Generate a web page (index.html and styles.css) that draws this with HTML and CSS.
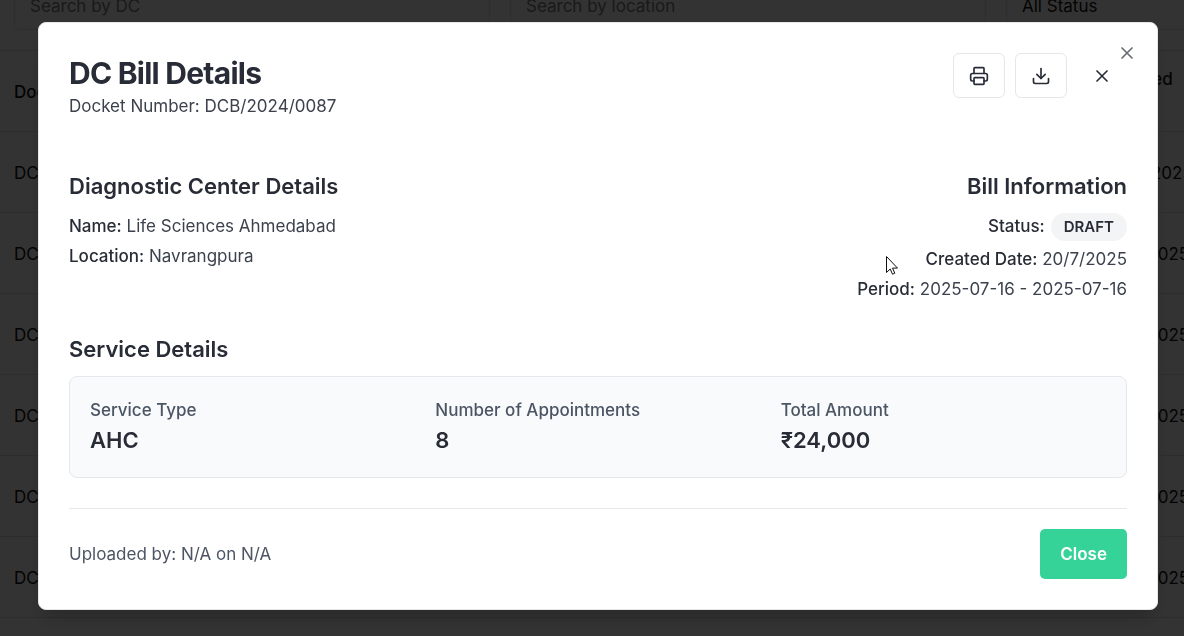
FILE: index.html
```html
<!DOCTYPE html>
<html lang="en">
<head>
<meta charset="utf-8">
<meta name="viewport" content="width=device-width, initial-scale=1">
<title>DC Bill Details</title>
<link rel="stylesheet" href="styles.css">
</head>
<body>
<main class="page" inert>
  <form class="filters">
    <input class="field" type="text" placeholder="Search by DC" aria-label="Search by DC">
    <input class="field" type="text" placeholder="Search by location" aria-label="Search by location">
    <select class="field field-select" aria-label="Status"><option>All Status</option></select>
  </form>
  <table class="bills">
    <thead><tr><th class="col-docket">Docket</th><th>Created<br>Date</th></tr></thead>
    <tbody>
      <tr><td>DCB</td><td>20/7/2025</td></tr>
      <tr><td>DCB</td><td>19/7/2025</td></tr>
      <tr><td>DCB</td><td>19/7/2025</td></tr>
      <tr><td>DCB</td><td>19/7/2025</td></tr>
      <tr><td>DCB</td><td>19/7/2025</td></tr>
      <tr><td>DCB</td><td>19/7/2025</td></tr>
    </tbody>
  </table>
</main>

<div class="overlay">
  <section class="modal" role="dialog" aria-modal="true" aria-labelledby="modal-title">
    <button class="dismiss" type="button" aria-label="Dismiss">
      <svg class="icon" viewBox="0 0 24 24"><path d="M18 6 6 18M6 6l12 12"/></svg>
    </button>

    <header class="modal-header">
      <div>
        <h1 class="title" id="modal-title">DC Bill Details</h1>
        <p class="text">Docket Number: DCB/2024/0087</p>
      </div>
      <div class="actions">
        <button class="icon-button" type="button" aria-label="Print">
          <svg class="icon" viewBox="0 0 24 24"><path d="M6 18H4a2 2 0 0 1-2-2v-5a2 2 0 0 1 2-2h16a2 2 0 0 1 2 2v5a2 2 0 0 1-2 2h-2"/><path d="M6 9V3a1 1 0 0 1 1-1h10a1 1 0 0 1 1 1v6"/><rect x="6" y="14" width="12" height="8" rx="1"/></svg>
        </button>
        <button class="icon-button" type="button" aria-label="Download">
          <svg class="icon" viewBox="0 0 24 24"><path d="M21 15v4a2 2 0 0 1-2 2H5a2 2 0 0 1-2-2v-4"/><path d="m7 10 5 5 5-5"/><path d="M12 15V3"/></svg>
        </button>
        <button class="icon-button ghost" type="button" aria-label="Close">
          <svg class="icon" viewBox="0 0 24 24"><path d="M18 6 6 18M6 6l12 12"/></svg>
        </button>
      </div>
    </header>

    <div class="info">
      <section>
        <h2 class="heading">Diagnostic Center Details</h2>
        <div class="lines">
          <p class="text"><span class="label">Name:</span> Life Sciences Ahmedabad</p>
          <p class="text"><span class="label">Location:</span> Navrangpura</p>
        </div>
      </section>
      <section class="align-end">
        <h2 class="heading">Bill Information</h2>
        <div class="lines">
          <p class="text status"><span class="label">Status:</span> <span class="badge">DRAFT</span></p>
          <p class="text"><span class="label">Created Date:</span> 20/7/2025</p>
          <p class="text"><span class="label">Period:</span> 2025-07-16 - 2025-07-16</p>
        </div>
      </section>
    </div>

    <section class="service">
      <h2 class="heading">Service Details</h2>
      <dl class="summary">
        <div><dt>Service Type</dt><dd>AHC</dd></div>
        <div><dt>Number of Appointments</dt><dd>8</dd></div>
        <div><dt>Total Amount</dt><dd>₹24,000</dd></div>
      </dl>
    </section>

    <footer class="modal-footer">
      <p class="text muted">Uploaded by: N/A on N/A</p>
      <button class="primary" type="button">Close</button>
    </footer>
  </section>
</div>

<svg class="pointer" viewBox="0 0 12 19" aria-hidden="true"><path d="M.5.5v16l3.700-3.500 2.300 5.200 2.300-1-2.300-5.100h5z"/></svg>
</body>
</html>
```
FILE: styles.css
```css
* {
  box-sizing: border-box;
}

body,
h1,
h2,
p,
dl,
dd {
  margin: 0;
}

body {
  height: 100vh;
  overflow: hidden;
  background: #fff;
  color: #272c36;
  font-family: Inter, "Liberation Sans", sans-serif;
  font-size: 17px;
  line-height: 26px;
}

button,
input,
select {
  font: inherit;
  color: inherit;
}

/* Bill list behind the dialog */
.page {
  height: calc(100vh + 20px);
  margin-top: -20px;
  overflow: hidden;
  color: #111;
}

.filters {
  display: grid;
  grid-template-columns: repeat(3, 476px);
  gap: 20px;
  padding: 0 14px 20px;
}

.field {
  height: 50px;
  padding: 2px 15px 0;
  border: 1px solid #e5e7eb;
  border-radius: 6px;
  background: #fff;
}

.field::placeholder {
  color: #808080;
}

.field-select {
  appearance: none;
}

.bills {
  width: 1240px;
  border-collapse: collapse;
  table-layout: fixed;
}

.bills th,
.bills td {
  height: 81px;
  padding: 2px 14px 0;
  border-top: 1px solid #e0e2e5;
  text-align: left;
  font-weight: 400;
}

.bills tbody tr:last-child td {
  border-bottom: 1px solid #e0e2e5;
}

.bills th {
  font-weight: 500;
}

.bills .col-docket {
  width: 1094px;
}

/* Dialog */
.overlay {
  position: fixed;
  inset: 0;
  display: flex;
  align-items: center;
  justify-content: center;
  padding: 0 26px 4px 38px;
  background: rgba(0, 0, 0, 0.8);
}

.modal {
  position: relative;
  width: 100%;
  max-width: 1120px;
  padding: 30px;
  border: 1px solid #e5e7eb;
  border-radius: 8px;
  background: #fff;
  box-shadow: 0 12px 18px -4px rgba(0, 0, 0, 0.2);
}

.icon {
  display: block;
  width: 20px;
  height: 20px;
  fill: none;
  stroke: currentColor;
  stroke-width: 2;
  stroke-linecap: round;
  stroke-linejoin: round;
}

.dismiss {
  position: absolute;
  top: 20px;
  right: 20px;
  padding: 0;
  border: 0;
  background: none;
  opacity: 0.7;
}

.modal-header {
  display: flex;
  justify-content: space-between;
  align-items: flex-start;
  margin-bottom: 53px;
}

.title {
  font-size: 30px;
  line-height: 40px;
  font-weight: 700;
  letter-spacing: -0.025em;
}

.text {
  color: #3c424d;
}

.label {
  color: #272c36;
  font-weight: 500;
}

.muted {
  color: #4b5563;
}

.actions {
  display: flex;
  gap: 10px;
}

.icon-button {
  height: 45px;
  padding: 0 15px;
  border: 1px solid #e5e7eb;
  border-radius: 6px;
  background: #fff;
}

.ghost {
  border-color: transparent;
  padding: 0 14px;
}

.info {
  display: flex;
  justify-content: space-between;
  margin-bottom: 33px;
}

.heading {
  margin-bottom: 13px;
  font-size: 22px;
  line-height: 28px;
  font-weight: 600;
}

.lines {
  display: grid;
  gap: 4px;
}

.align-end {
  text-align: right;
}

.status {
  display: flex;
  justify-content: flex-end;
  align-items: flex-start;
  gap: 6px;
  height: 29px;
}

.badge {
  padding: 1px 13px;
  border-radius: 14px;
  background: #f3f4f6;
  color: #272c36;
  font-size: 15px;
  font-weight: 600;
}

.summary {
  display: grid;
  grid-template-columns: repeat(3, 1fr);
  gap: 20px;
  padding: 20px;
  border: 1px solid #e5e7eb;
  border-radius: 8px;
  background: #f9fafc;
}

.summary dt {
  color: #4b5563;
  font-weight: 500;
}

.summary dd {
  font-size: 22px;
  line-height: 34px;
  font-weight: 600;
}

.modal-footer {
  display: flex;
  justify-content: space-between;
  align-items: center;
  margin-top: 30px;
  padding-top: 20px;
  border-top: 1px solid #e5e7eb;
}

.primary {
  padding: 12px 20px;
  border: 0;
  border-radius: 5px;
  background: #36d399;
  color: #fff;
  font-weight: 600;
}

/* Mouse pointer */
.pointer {
  position: fixed;
  top: 256px;
  left: 886px;
  width: 12px;
  height: 19px;
  fill: #fff;
  stroke: #111;
}
```
